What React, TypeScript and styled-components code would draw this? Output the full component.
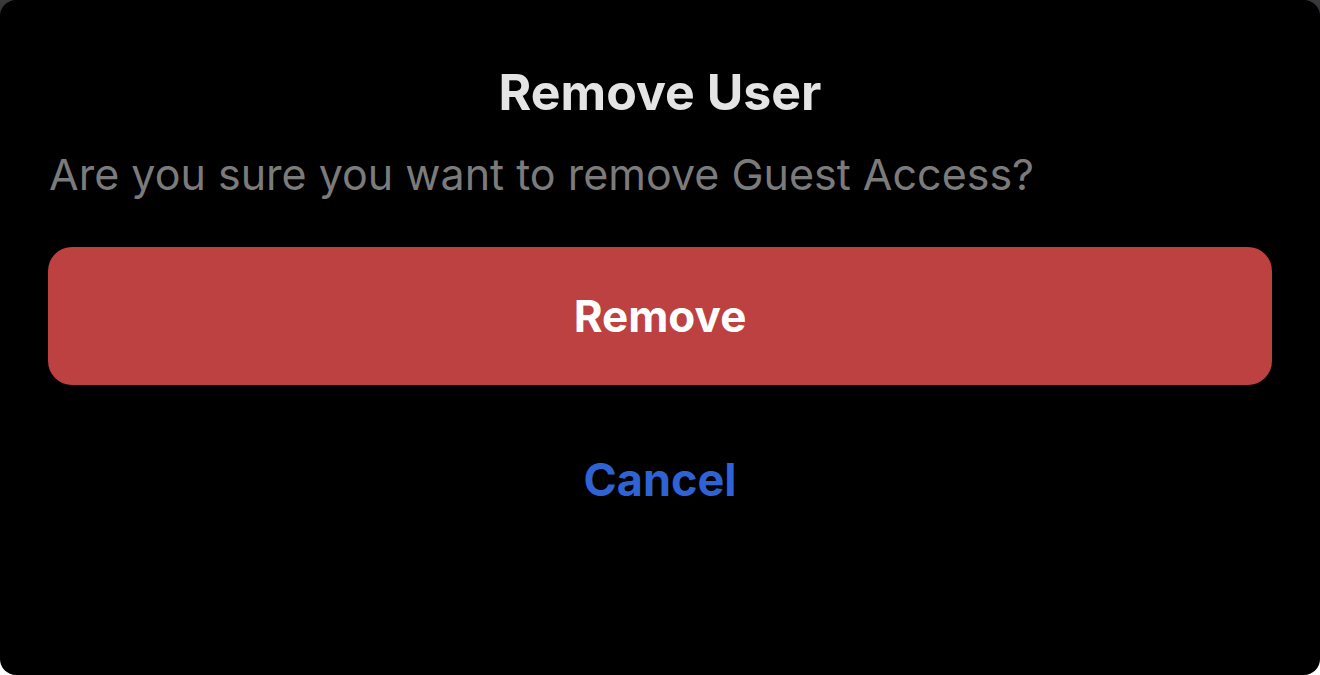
import React from 'react'
import styled, { createGlobalStyle } from 'styled-components'

const GlobalStyle = createGlobalStyle`
  html, body {
    margin: 0;
    padding: 0;
    height: 100%;
  }
  body {
    background: linear-gradient(180deg, #3a3a3c 0%, #1c1c1e 10%, #ffffff 90%);
    font-family: Inter, 'Noto Sans', sans-serif;
  }
  #root {
    height: 100%;
  }
`

const Sheet = styled.div`
  box-sizing: border-box;
  width: 1320px;
  height: 675px;
  background: #000;
  border-radius: 16px;
  display: flex;
  flex-direction: column;
  padding: 62px 48px 0 48px;
`

const Title = styled.h1`
  margin: 0;
  text-align: center;
  font-size: 50px;
  font-weight: 700;
  line-height: 60px;
  color: #e4e4e4;
`

const Message = styled.p`
  margin: 28px 0 0 1px;
  font-size: 43px;
  font-weight: 400;
  line-height: 48px;
  color: #7b7b7b;
`

const DangerButton = styled.button`
  margin-top: 49px;
  height: 138px;
  border: none;
  border-radius: 24px;
  background: #bc4140;
  color: #fff;
  font-family: inherit;
  font-size: 44px;
  font-weight: 700;
`

const TextButton = styled.button`
  align-self: center;
  margin-top: 64px;
  border: none;
  background: transparent;
  color: #2f62d4;
  font-family: inherit;
  font-size: 45px;
  font-weight: 700;
  line-height: 60px;
`

export default function App() {
  return (
    <>
      <GlobalStyle />
      <Sheet>
        <Title>Remove User</Title>
        <Message>Are you sure you want to remove Guest Access?</Message>
        <DangerButton>Remove</DangerButton>
        <TextButton>Cancel</TextButton>
      </Sheet>
    </>
  )
}
